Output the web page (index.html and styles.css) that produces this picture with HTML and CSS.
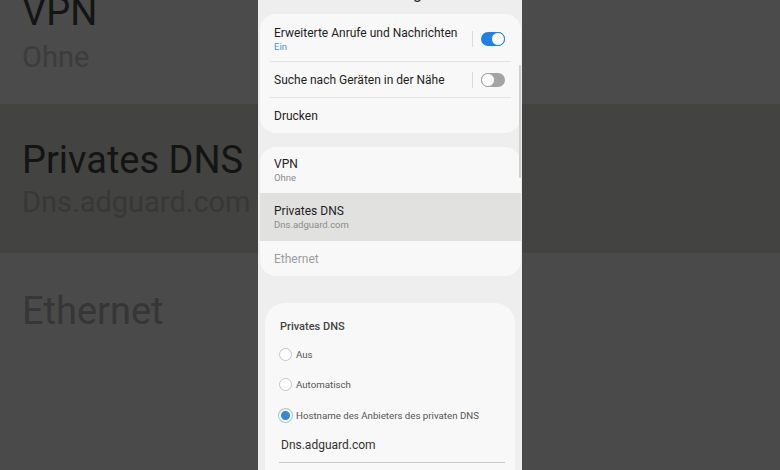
FILE: index.html
```html
<!DOCTYPE html>
<html lang="de">

<head>
    <meta charset="UTF-8">
    <meta name="viewport" content="width=device-width, initial-scale=1.0">
    <title>Privates DNS</title>
    <link rel="stylesheet" href="styles.css">
</head>

<body>
    <div class="screen">
        <!-- vergrösserter Hintergrund links -->
        <div class="side side-left">
            <div class="band band-top">
                <div class="big">VPN</div>
                <div class="big-sub">Ohne</div>
            </div>
            <div class="band band-mid">
                <div class="big big-dns">Privates DNS</div>
                <div class="big-sub big-sub-dns">Dns.adguard.com</div>
            </div>
            <div class="band band-bottom">
                <div class="big big-eth">Ethernet</div>
            </div>
        </div>

        <!-- Telefon -->
        <div class="phone">
            <div class="title">Verbindungen</div>

            <div class="card card-first">
                <div class="row row-two">
                    <div class="text">
                        <div class="label">Erweiterte Anrufe und Nachrichten</div>
                        <div class="sub sub-on">Ein</div>
                    </div>
                    <div class="switch-wrap">
                        <span class="sep"></span>
                        <span class="switch on"></span>
                    </div>
                </div>
                <div class="row">
                    <div class="label">Suche nach Geräten in der Nähe</div>
                    <div class="switch-wrap">
                        <span class="sep"></span>
                        <span class="switch"></span>
                    </div>
                </div>
                <div class="row">
                    <div class="label">Drucken</div>
                </div>
            </div>

            <div class="card card-second">
                <div class="item item-vpn">
                    <div class="label">VPN</div>
                    <div class="sub">Ohne</div>
                </div>
                <div class="item item-dns">
                    <div class="label">Privates DNS</div>
                    <div class="sub">Dns.adguard.com</div>
                </div>
                <div class="item item-eth">
                    <div class="label disabled">Ethernet</div>
                </div>
            </div>

            <div class="dialog">
                <div class="dialog-title">Privates DNS</div>
                <div class="radio-row">
                    <span class="radio"></span>
                    <span class="radio-label">Aus</span>
                </div>
                <div class="radio-row">
                    <span class="radio"></span>
                    <span class="radio-label">Automatisch</span>
                </div>
                <div class="radio-row">
                    <span class="radio checked"></span>
                    <span class="radio-label">Hostname des Anbieters des privaten DNS</span>
                </div>
                <div class="input">Dns.adguard.com</div>
            </div>

            <span class="scrollbar"></span>
        </div>

        <!-- Hintergrund rechts -->
        <div class="side side-right">
            <div class="band band-top"></div>
            <div class="band band-mid"></div>
            <div class="band band-bottom"></div>
        </div>
    </div>
</body>

</html>
```

FILE: styles.css
```css
body {
    margin: 0;
    font-family: Roboto, "Noto Sans", "Liberation Sans", sans-serif;
}
html , body {
    width: 100%;
    height: 100%;
    overflow: hidden;
    background-color: #4b4b4b;
}
.screen {
    display: grid;
    grid-template-columns: 258px 264px 258px;
    height: 470px;
}

/* Hintergrund */
.side {
    display: flex;
    flex-direction: column;
    overflow: hidden;
}
.band {
    background-color: #4b4b4b;
}
.band-top {
    height: 104px;
}
.band-mid {
    height: 149px;
    background-color: #434341;
}
.band-bottom {
    flex: 1;
    background-color: #4a4a4a;
}
.side-left .band {
    padding-left: 22px;
}
.big {
    font-size: 38px;
    line-height: 1;
    color: #141414;
    white-space: nowrap;
    margin-top: -7px;
}
.big-sub {
    font-size: 29px;
    line-height: 1;
    color: #3c3c3c;
    white-space: nowrap;
    margin-top: 12px;
}
.big-dns {
    margin-top: 37px;
}
.big-sub-dns {
    margin-top: 9px;
    color: #383838;
}
.big-eth {
    margin-top: 39px;
    color: #363636;
}

/* Telefon */
.phone {
    position: relative;
    background-color: #eeeeee;
    overflow: hidden;
}
.title {
    font-size: 16px;
    line-height: 16px;
    text-align: center;
    color: #222;
    margin-top: -14px;
}
.card {
    background-color: #f8f8f8;
    border-radius: 16px;
    margin: 12px 1px 0 2px;
    overflow: hidden;
}
.card-second {
    margin-top: 14px;
}
.label {
    font-size: 12px;
    line-height: 14px;
    color: #1e1e1e;
    white-space: nowrap;
}
.sub {
    font-size: 9.5px;
    line-height: 13px;
    color: #8c8c8c;
}
.sub-on {
    color: #3a9ad6;
}
.disabled {
    color: #9c9c9c;
}
.row {
    display: flex;
    align-items: center;
    justify-content: space-between;
    height: 36px;
    margin: 0 10px;
    padding: 0 6px 0 4px;
}
.row + .row {
    border-top: 1px solid #e4e4e4;
    height: 35px;
}
.row-two {
    height: 47px;
    box-sizing: border-box;
    align-items: flex-start;
}
.row-two .text {
    padding-top: 12px;
}
.row-two .switch-wrap {
    margin-top: 17px;
}
.switch-wrap {
    display: flex;
    align-items: center;
}
.sep {
    width: 1px;
    height: 16px;
    background-color: #dadada;
    margin-right: 8px;
}
.switch {
    width: 24px;
    height: 14px;
    border-radius: 7px;
    background-color: #a3a3a3;
    box-sizing: border-box;
    position: relative;
}
.switch::after {
    content: "";
    position: absolute;
    left: 0;
    top: 0;
    width: 14px;
    height: 14px;
    border-radius: 50%;
    box-sizing: border-box;
    background-color: #fff;
    border: 1px solid #a3a3a3;
}
.switch.on {
    background-color: #1f7fe6;
}
.switch.on::after {
    left: 10px;
    border-color: #1f7fe6;
}
.item {
    display: flex;
    flex-direction: column;
    justify-content: center;
    padding: 0 14px;
}
.item-vpn {
    height: 46px;
    padding-top: 1px;
    box-sizing: border-box;
}
.item-dns {
    height: 48px;
    background-color: #e1e1df;
}
.item-eth {
    height: 35px;
}

/* Dialog */
.dialog {
    background-color: #f8f8f8;
    border-radius: 20px 20px 0 0;
    margin: 27px 7px 0 7px;
    padding: 17px 10px 40px 14px;
}
.dialog-title {
    font-size: 11px;
    line-height: 14px;
    font-weight: 500;
    color: #444;
    padding-left: 1px;
    margin-bottom: 5px;
}
.radio-row {
    display: flex;
    align-items: center;
    gap: 4px;
    height: 30.5px;
}
.radio {
    width: 13px;
    height: 13px;
    border-radius: 50%;
    border: 1px solid #c6c6c6;
    box-sizing: border-box;
    background-color: #fff;
}
.radio.checked {
    background-color: #3088e5;
    border: 2px solid #fff;
    box-shadow: 0 0 0 1px #9ec3ea;
}
.radio-label {
    font-size: 9.7px;
    color: #555;
    white-space: nowrap;
}
.input {
    font-size: 12px;
    line-height: 16px;
    color: #333;
    margin-top: 6px;
    padding: 0 0 9px 2px;
    border-bottom: 1px solid #c9c9c9;
}

.scrollbar {
    position: absolute;
    right: 1px;
    top: 65px;
    width: 2px;
    height: 113px;
    border-radius: 1px;
    background-color: #cfcfcf;
}
```
